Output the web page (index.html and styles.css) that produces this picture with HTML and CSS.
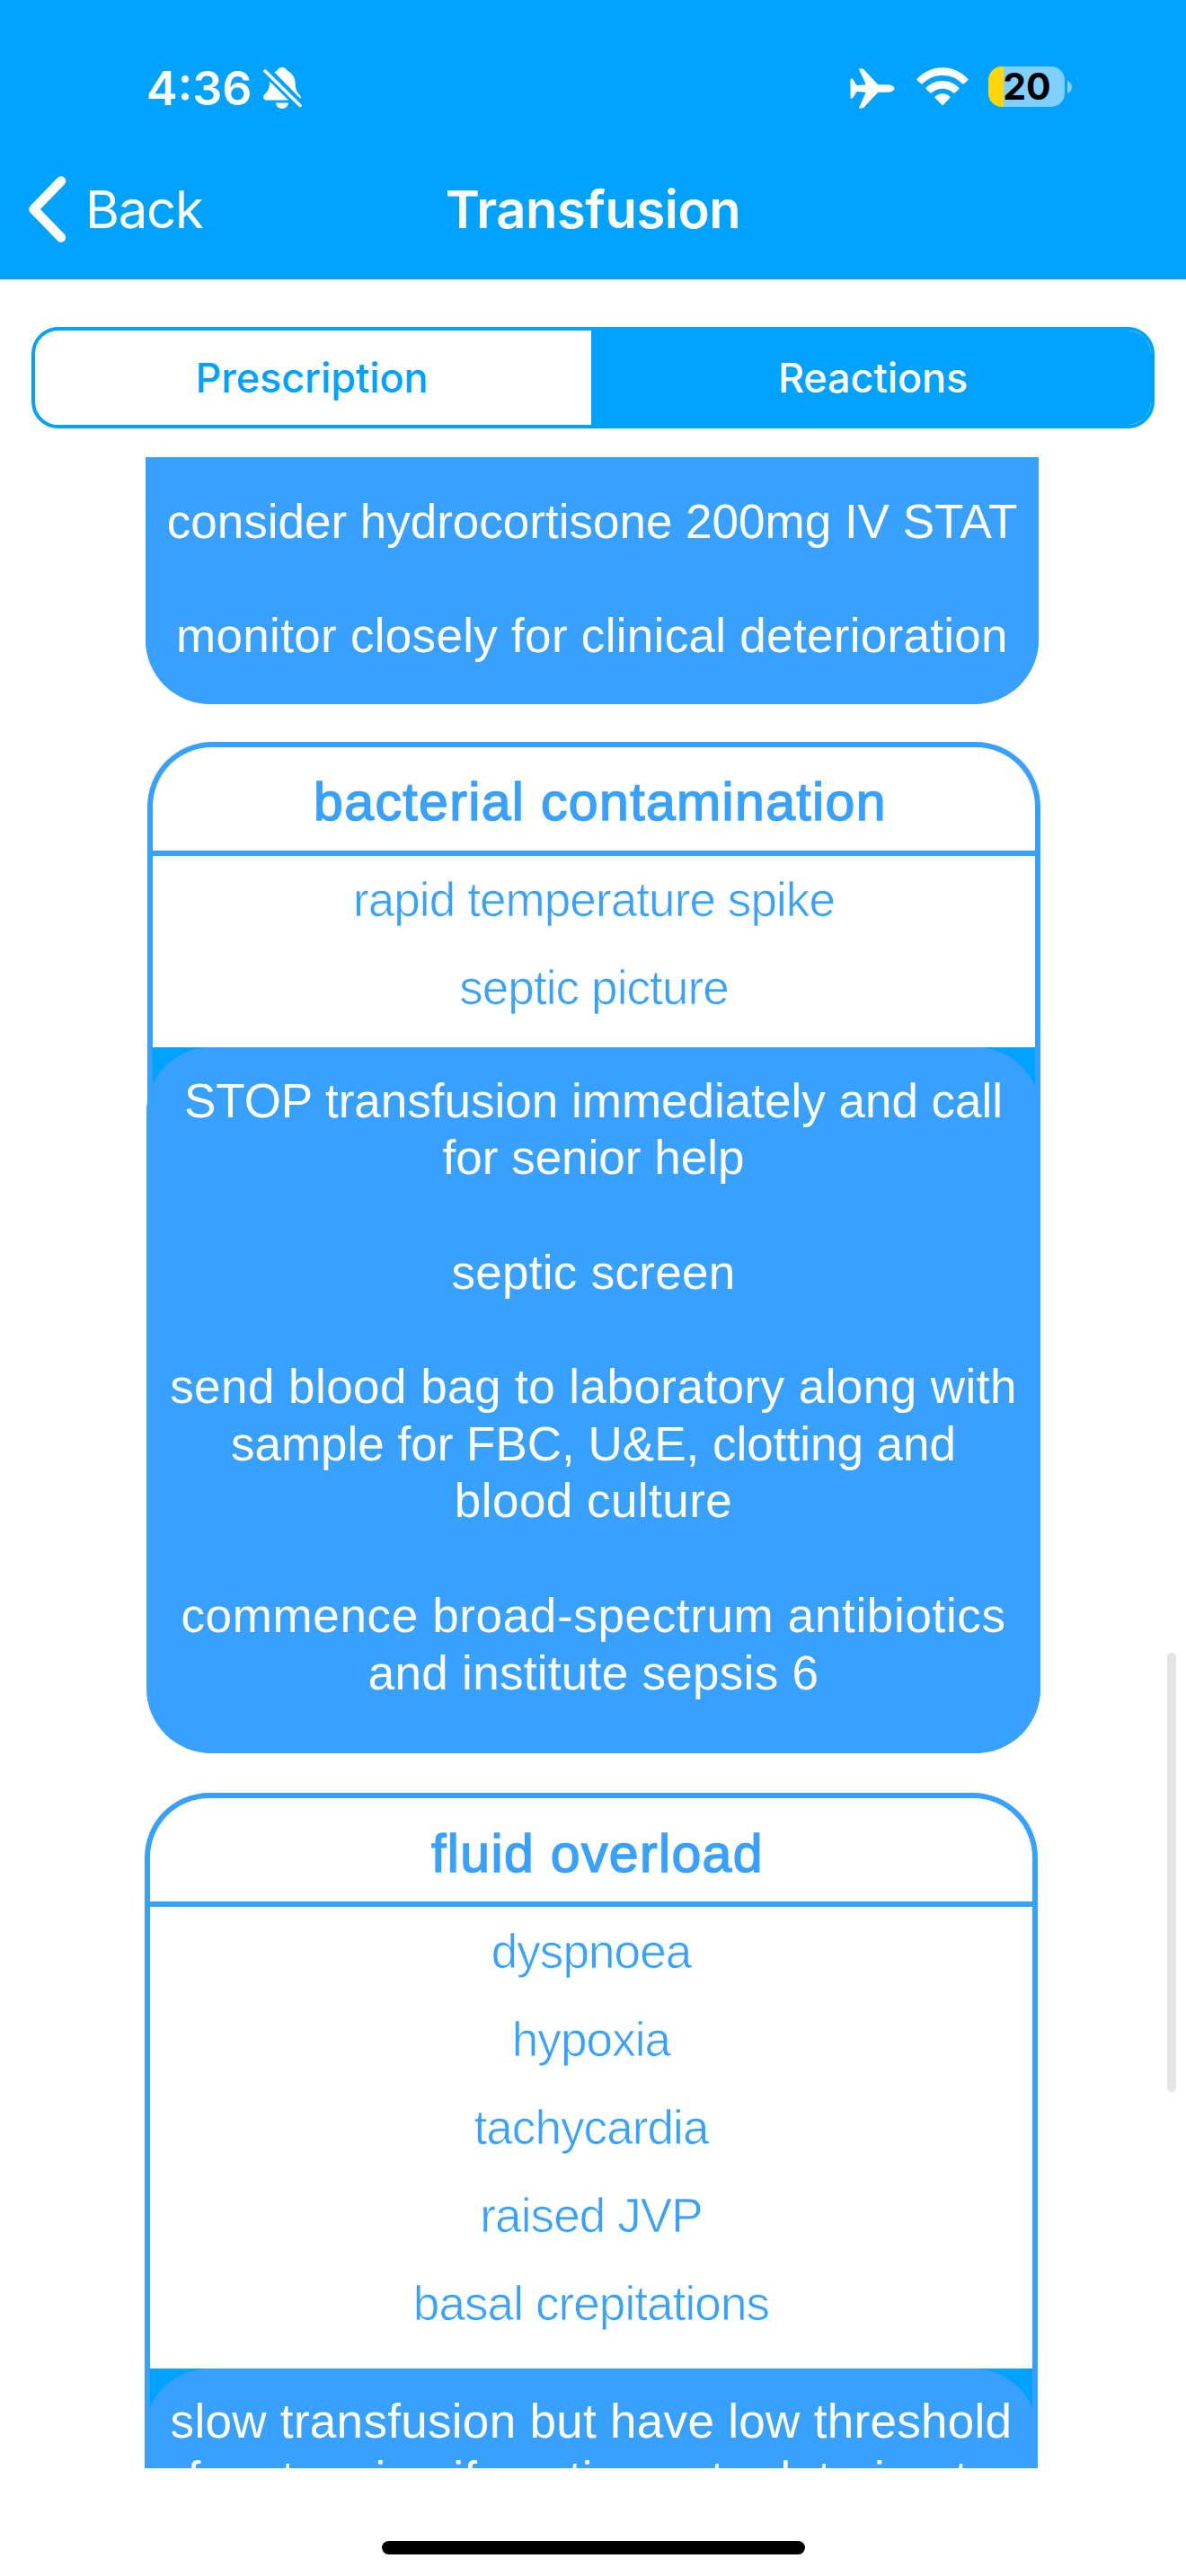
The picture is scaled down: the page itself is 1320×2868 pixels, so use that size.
FILE: index.html
```html
<!DOCTYPE html>
<html lang="en">
<head>
<meta charset="utf-8">
<title>Transfusion</title>
<link rel="stylesheet" href="styles.css">
</head>
<body>
<header class="header">
  <div class="status">
    <div class="status-left">
      <span class="clock">4:36</span>
      <svg class="bell" width="43" height="46" viewBox="0 0 43 46" fill="#fff">
        <path d="M12.500 5.500C14.500 3.800 15.500 3.600 16 2.500C17 .8 19 0 21 0C23 0 25 .8 26 2.500C26.500 3.600 27.500 3.900 29.500 5.500C34 9 35.500 13 35.700 18C36 25 37 27 40.500 30.500C41.800 32 42 33.500 41.500 35Z"/>
        <path d="M7 15.500L28 36.500H3.500C-.3 36.500-.8 32.500 1.500 30C5.200 26.500 7 24 7 15.500Z"/>
        <path d="M14 39.500H28C27.500 43.500 24.500 46 21 46S14.500 43.500 14 39.500Z"/>
        <path d="M2 4L41 42.500" fill="none" stroke="#fff" stroke-width="3.600" stroke-linecap="round"/>
      </svg>
    </div>
    <div class="status-right">
      <svg class="plane" width="50" height="45" viewBox="0 0 50 45" fill="#fff">
        <path d="M11 .5H13.500C14.800.5 15.600 1.200 16.500 2.400L30.500 17.500C31 18 31.500 18.200 32.300 18.200H41C46 18.200 49.500 20.300 49.500 22.500S46 26.800 41 26.800H32.300C31.500 26.800 31 27 30.500 27.500L16.500 42.600C15.600 43.800 14.800 44.500 13.500 44.500H11C10.300 44.500 10 44 10.300 43.200L17.500 27.500C17.700 27 17.500 26.700 17 26.700L8.500 26C7.700 26 7.300 26.200 6.900 26.900L3.500 32.500C3.100 33.300 2.600 33.600 1.800 33.600H.5V11.400H1.800C2.600 11.400 3.100 11.700 3.500 12.500L6.900 18.100C7.300 18.800 7.700 19 8.500 19L17 18.300C17.500 18.300 17.700 18 17.500 17.500L10.300 1.800C10 1 10.300.5 11 .5Z"/>
      </svg>
      <svg class="wifi" width="58" height="43" viewBox="0 0 58 43" fill="#fff">
        <path d="M1 12.400C8.500 4.700 18.400.2 29 .2S49.500 4.700 57 12.400C57.800 13.200 57.800 13.900 57.100 14.600L53 18.100C52.300 18.700 51.600 18.700 50.900 18C45 12.200 37.300 9 29 9S13 12.200 7.100 18C6.400 18.700 5.700 18.700 5 18.100L.9 14.600C.2 13.900.2 13.200 1 12.400Z"/>
        <path d="M11 22.300C15.800 17.600 22.100 14.900 29 14.900S42.200 17.600 47 22.300C47.700 23 47.700 23.700 47 24.400L42.900 28.300C42.200 28.900 41.500 28.900 40.800 28.300C37.500 25.400 33.500 23.800 29 23.800S20.500 25.400 17.200 28.300C16.500 28.900 15.800 28.900 15.100 28.300L11 24.400C10.300 23.700 10.300 23 11 22.300Z"/>
        <path d="M21 32.200C23.200 30.300 26 29.300 29 29.300S34.800 30.300 37 32.200C37.800 32.900 37.800 33.600 37.100 34.300L30 41.600C29.300 42.300 28.700 42.300 28 41.600L20.900 34.300C20.200 33.600 20.200 32.900 21 32.200Z"/>
      </svg>
      <div class="battery"><span class="battery-level">20</span></div>
      <svg class="battery-cap" width="5" height="14" viewBox="0 0 5 14"><path d="M0 0C3 1 5 3.800 5 7S3 13 0 14Z" fill="#80cfff"/></svg>
    </div>
  </div>
  <nav class="nav">
    <a class="back">
      <svg width="44" height="76" viewBox="0 0 44 76" fill="none" stroke="#fff" stroke-width="10.500" stroke-linecap="round" stroke-linejoin="round"><path d="M37 6.500L6.500 38L37 69.500"/></svg>
      <span>Back</span>
    </a>
    <h1 class="title">Transfusion</h1>
    <span></span>
  </nav>
</header>

<div class="segmented">
  <div class="segment">Prescription</div>
  <div class="segment selected">Reactions</div>
</div>

<main class="scroll">
  <section class="card card-first">
    <div class="treatment">
      <div class="treatment-body">
        <p class="tight">consider hydrocortisone 200mg IV STAT</p>
        <p>monitor closely for clinical deterioration</p>
      </div>
    </div>
  </section>

  <section class="card card-second">
    <h2 class="reaction">bacterial contamination</h2>
    <ul class="signs">
      <li>rapid temperature spike</li>
      <li>septic picture</li>
    </ul>
    <div class="treatment">
      <div class="treatment-body">
        <p class="tight">STOP transfusion immediately and call<br>for senior help</p>
        <p>septic screen</p>
        <p><span class="wide">send blood bag to laboratory along with</span><br><span class="tight">sample for FBC, U&amp;E, clotting and</span><br><span class="wide">blood culture</span></p>
        <p><span class="wider">commence broad-spectrum antibiotics</span><br>and institute sepsis 6</p>
      </div>
    </div>
  </section>

  <section class="card card-third">
    <h2 class="reaction">fluid overload</h2>
    <ul class="signs">
      <li>dyspnoea</li>
      <li>hypoxia</li>
      <li>tachycardia</li>
      <li>raised JVP</li>
      <li>basal crepitations</li>
    </ul>
    <div class="treatment">
      <div class="treatment-body">
        <p>slow transfusion but have low threshold<br>for stopping if continues to deteriorate</p>
      </div>
    </div>
  </section>
  <div class="scrollbar"></div>
</main>

<footer class="home"><div class="home-bar"></div></footer>
</body>
</html>
```
FILE: styles.css
```css
:root {
  --bar: #00a2ff;
  --card: #38a1ff;
}
* { box-sizing: border-box; }
body {
  margin: 0;
  width: 1320px;
  height: 2868px;
  overflow: hidden;
  background: #fff;
  font-family: "Liberation Sans", Arial, sans-serif;
}
h1, h2, p, ul { margin: 0; padding: 0; font-weight: 400; }
ul { list-style: none; }

.header {
  height: 311px;
  background: var(--bar);
  color: #fff;
  font-family: Inter, sans-serif;
}
.status {
  height: 155px;
  padding: 41px 127px 0 163px;
  display: flex;
  justify-content: space-between;
  align-items: center;
}
.status-left, .status-right { display: flex; align-items: center; }
.clock { font-size: 52px; font-weight: 600; line-height: 60px; padding-top: 1px; }
.bell { margin-left: 12px; }
.plane { margin-right: 24px; }
.wifi { margin: 0 22px 0 0; position: relative; top: -2px; }
.battery {
  width: 85px;
  height: 45px;
  margin-top: -3px;
  border-radius: 15px;
  background: linear-gradient(90deg, #ffd60a 17px, #80cfff 17px);
  display: flex;
  align-items: center;
  justify-content: center;
}
.battery-level { font-size: 41px; font-weight: 650; line-height: 45px; color: #000; padding-left: 1px; }
.battery-cap { margin: -2px 0 0 3px; }

.nav {
  height: 156px;
  padding: 0 31px;
  display: grid;
  grid-template-columns: 1fr auto 1fr;
  align-items: center;
}
.back { display: flex; align-items: center; gap: 20px; font-size: 58px; letter-spacing: -1.2px; }
.title { font-size: 58px; font-weight: 600; letter-spacing: -.5px; }

.segmented {
  height: 113px;
  margin: 53px 35px 32px;
  border: 4px solid var(--bar);
  border-radius: 30px;
  overflow: hidden;
  display: grid;
  grid-template-columns: 619px 1fr;
  font: 450 45px Inter, sans-serif;
  letter-spacing: -.1px;
  color: var(--bar);
}
.segment { display: flex; align-items: center; justify-content: center; padding-right: 3px; }
.segment.selected { background: var(--bar); color: #fff; padding: 0 0 0 4px; }

.scroll { height: 2239px; overflow: hidden; position: relative; }
.card {
  width: 994px;
  border: 6px solid var(--card);
  border-bottom: 0;
  border-radius: 72px;
}
.card-first {
  margin-left: 162px;
  border-top: 0;
  border-top-left-radius: 0;
  border-top-right-radius: 0;
}
.card-second { margin: 41.500px 0 43.500px 164px; }
.card-third { margin-left: 161px; }

.reaction {
  height: 121px;
  padding: 7px 0 0 14px;
  border-bottom: 6px solid var(--card);
  font-size: 59px;
  line-height: 108px;
  letter-spacing: 1.350px;
  text-align: center;
  color: var(--card);
  -webkit-text-stroke: 1.500px var(--card);
}
.signs {
  padding-bottom: 17px;
  font-size: 53px;
  line-height: 98px;
  letter-spacing: -.9px;
  text-align: center;
  color: var(--card);
  -webkit-text-stroke: .7px #fff;
}
.card-third .reaction { padding-top: 8px; }
.card-third .signs { padding: 1px 0 23px; }

.treatment { background: var(--bar); border-radius: 0 0 70px 70px; }
.treatment-body {
  margin: 0 -6px;
  padding: 28px 0 58px;
  border-radius: 72px;
  background: var(--card);
  color: #fff;
  font-size: 53px;
  line-height: 63.700px;
  letter-spacing: .3px;
  text-align: center;
  white-space: nowrap;
  display: grid;
  gap: 63.700px;
}
.card-first .treatment-body { padding: 40px 0 44px; border-radius: 0 0 72px 72px; }
.card-second .treatment-body { margin-left: -7px; }
.card-third .treatment-body { padding-top: 27.500px; }
.tight { letter-spacing: 0; }
.wide { letter-spacing: .45px; }
.wider { letter-spacing: .65px; }

.scrollbar {
  position: absolute;
  top: 1331px;
  right: 11px;
  width: 10px;
  height: 489px;
  border-radius: 5px;
  background: #e4e4e4;
}
.home { height: 120px; display: flex; justify-content: center; padding-top: 81px; }
.home-bar { width: 471px; height: 15px; border-radius: 8px; background: #000; }
```
